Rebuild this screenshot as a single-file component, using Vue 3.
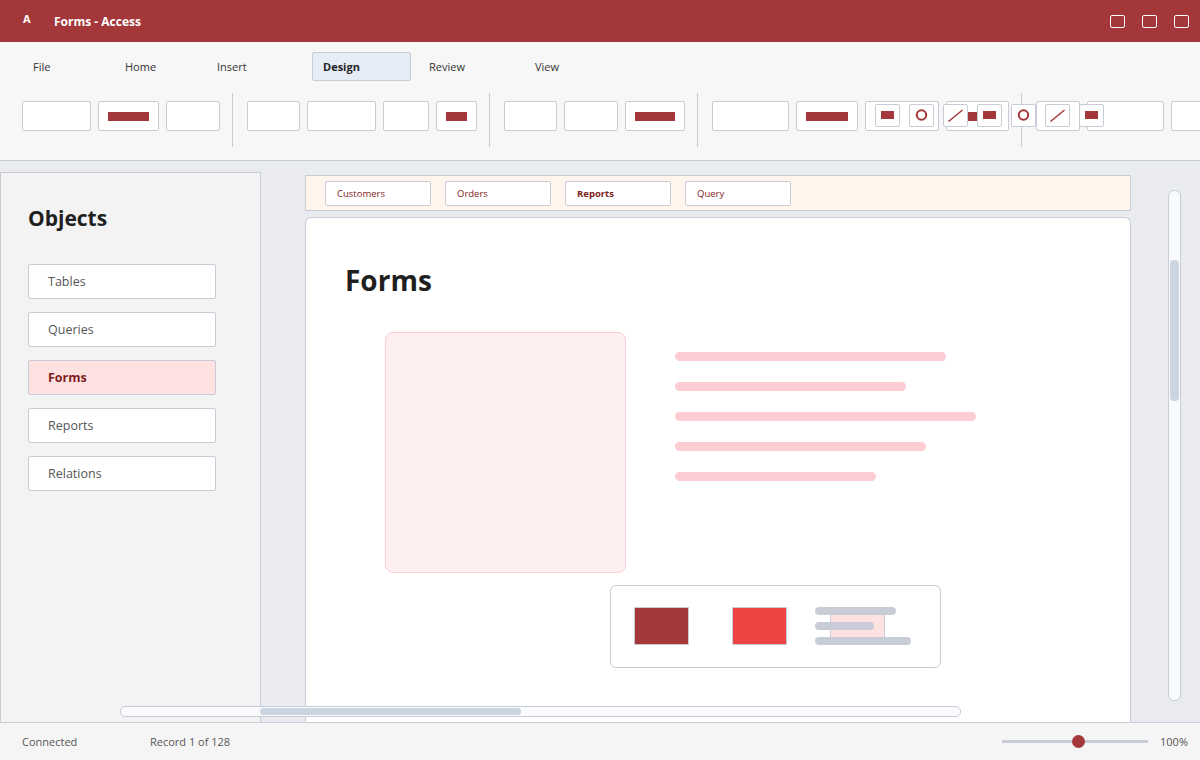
<template>
  <div class="app">
    <header class="titlebar">
      <span class="logo">A</span>
      <span class="title">Forms - Access</span>
      <div class="window-btns">
        <span v-for="n in 3" :key="n" class="window-btn"></span>
      </div>
    </header>

    <section class="ribbon">
      <nav class="tabs">
        <span
          v-for="t in ribbonTabs"
          :key="t.label"
          class="tab"
          :class="{ active: t.label === 'Design', wide: t.wide }"
        >{{ t.label }}</span>
      </nav>
      <div class="groups">
        <div v-for="(group, i) in groups" :key="i" class="group">
          <span
            v-for="(b, j) in group"
            :key="j"
            class="rbtn"
            :style="{ width: b.w + 'px' }"
          ><i v-if="b.fill" class="fill"></i></span>
        </div>
      </div>
      <!-- these sit on top of the ribbon buttons -->
      <div class="tools">
        <span v-for="(k, i) in tools" :key="i" class="tool">
          <svg width="23" height="21" viewBox="0 0 23 21">
            <rect v-if="k === 'rect'" x="5" y="6" width="13" height="8" fill="#a4373a" />
            <circle v-else-if="k === 'circle'" cx="11.5" cy="10" r="4.7" fill="none" stroke="#a4373a" stroke-width="2" />
            <line v-else x1="4.5" y1="16.5" x2="18.5" y2="5" stroke="#a4373a" stroke-width="1.5" />
          </svg>
        </span>
      </div>
    </section>

    <main class="body">
      <aside class="sidebar">
        <h2>Objects</h2>
        <ul>
          <li v-for="o in objects" :key="o" :class="{ active: o === 'Forms' }">{{ o }}</li>
        </ul>
      </aside>

      <div class="center">
        <div class="doc-tabs">
          <span
            v-for="d in docTabs"
            :key="d"
            class="doc-tab"
            :class="{ active: d === 'Reports' }"
          >{{ d }}</span>
        </div>
        <div class="canvas">
          <h1>Forms</h1>
          <div class="hero">
            <div class="placeholder"></div>
            <div class="lines">
              <span v-for="w in lineWidths" :key="w" class="line" :style="{ width: w + 'px' }"></span>
            </div>
          </div>
          <div class="card">
            <span class="swatch dark"></span>
            <span class="swatch red"></span>
            <span class="swatch pale"></span>
            <div class="card-lines">
              <span v-for="w in cardLines" :key="w" :style="{ width: w + 'px' }"></span>
            </div>
          </div>
        </div>
      </div>

      <div class="hscroll"><span class="thumb"></span></div>
      <div class="vscroll"><span class="thumb"></span></div>
    </main>

    <footer class="status">
      <span class="connected">Connected</span>
      <span>Record 1 of 128</span>
      <div class="zoom">
        <div class="slider"><span class="knob"></span></div>
        <span>100%</span>
      </div>
    </footer>
  </div>
</template>

<script setup>
const ribbonTabs = [
  { label: 'File' },
  { label: 'Home' },
  { label: 'Insert', wide: true },
  { label: 'Design', wide: true },
  { label: 'Review', wide: true },
  { label: 'View', wide: true }
]

const groups = [
  [{ w: 69 }, { w: 61, fill: true }, { w: 54 }],
  [{ w: 53 }, { w: 69 }, { w: 46 }, { w: 41, fill: true }],
  [{ w: 53 }, { w: 54 }, { w: 60, fill: true }],
  [{ w: 77 }, { w: 62, fill: true }, { w: 74 }, { w: 63, fill: true }],
  [{ w: 44, fill: true }, { w: 77 }, { w: 60 }]
]

const tools = ['rect', 'circle', 'line', 'rect', 'circle', 'line', 'rect']
const objects = ['Tables', 'Queries', 'Forms', 'Reports', 'Relations']
const docTabs = ['Customers', 'Orders', 'Reports', 'Query']
const lineWidths = [271, 231, 301, 251, 201]
const cardLines = [81, 59, 96]
</script>

<style>
html, body {
  margin: 0;
  background: #e9ebef;
}
</style>

<style scoped>
.app {
  width: 1200px;
  height: 760px;
  display: flex;
  flex-direction: column;
  overflow: hidden;
  font-family: "Open Sans", "Noto Sans", sans-serif;
  color: #1f1f1f;
  background: #e9ebef;
}

.titlebar {
  height: 42px;
  flex: none;
  display: flex;
  align-items: center;
  padding: 0 11px 0 23px;
  background: #a4373a;
  color: #fff;
}
.logo {
  width: 31px;
  font-size: 11px;
  font-weight: 700;
  margin-top: -5px;
}
.title {
  font-size: 12px;
  font-weight: 700;
}
.window-btns {
  margin-left: auto;
  display: flex;
  gap: 17px;
}
.window-btn {
  width: 15px;
  height: 13px;
  box-sizing: border-box;
  border: 1px solid #fff;
  border-radius: 2px;
}

.ribbon {
  position: relative;
  height: 119px;
  flex: none;
  box-sizing: border-box;
  padding: 10px 0 0 22px;
  background: #f7f7f7;
  border-bottom: 1px solid #c8ccd6;
  overflow: hidden;
}
.tabs {
  display: flex;
  gap: 7px;
  height: 29px;
}
.tab {
  width: 85px;
  box-sizing: border-box;
  padding-left: 10px;
  display: flex;
  align-items: center;
  font-size: 11px;
  color: #333;
  border: 1px solid transparent;
  border-radius: 2px;
}
.tab.wide {
  width: 99px;
}
.tab.active {
  background: #e6edf7;
  border-color: #c8ccd6;
  color: #1f1f1f;
  font-weight: 700;
}
.groups {
  display: flex;
  margin-top: 12px;
}
.group {
  display: flex;
  gap: 7px;
  height: 54px;
  padding-right: 12px;
  margin-right: 14px;
  border-right: 1px solid #c8ccd6;
  box-sizing: border-box;
  padding-top: 8px;
}
.group:last-child {
  border-right: none;
}
.rbtn {
  height: 30px;
  flex: none;
  box-sizing: border-box;
  display: flex;
  align-items: center;
  justify-content: center;
  padding: 0 9px;
  background: #fff;
  border: 1px solid #c8ccd6;
  border-radius: 2px;
}
.fill {
  display: block;
  width: 100%;
  height: 9px;
  background: #a4373a;
}
.tools {
  position: absolute;
  left: 875px;
  top: 62px;
  display: flex;
  gap: 9px;
}
.tool {
  width: 25px;
  height: 23px;
  box-sizing: border-box;
  background: #fff;
  border: 1px solid #c8ccd6;
  border-radius: 2px;
}
.tool svg {
  display: block;
}

.body {
  position: relative;
  flex: 1;
  min-height: 0;
  display: flex;
  gap: 44px;
}
.sidebar {
  width: 261px;
  flex: none;
  margin-top: 11px;
  box-sizing: border-box;
  padding: 30px 44px 0 27px;
  background: #f3f3f3;
  border: 1px solid #c8ccd6;
  border-bottom: none;
}
.sidebar h2 {
  margin: 0;
  font-size: 21px;
  line-height: 30px;
  font-weight: 700;
}
.sidebar ul {
  list-style: none;
  margin: 31px 0 0;
  padding: 0;
  display: flex;
  flex-direction: column;
  gap: 13px;
}
.sidebar li {
  height: 35px;
  box-sizing: border-box;
  display: flex;
  align-items: center;
  padding-left: 19px;
  font-size: 12.5px;
  color: #555;
  background: #fff;
  border: 1px solid #c8ccd6;
  border-radius: 2px;
}
.sidebar li.active {
  background: #fee2e2;
  color: #7f1d1d;
  font-weight: 700;
}

.center {
  width: 826px;
  flex: none;
  display: flex;
  flex-direction: column;
  gap: 6px;
  padding-top: 14px;
}
.doc-tabs {
  height: 36px;
  box-sizing: border-box;
  display: flex;
  align-items: center;
  gap: 14px;
  padding: 0 19px;
  background: #fff5ec;
  border: 1px solid #c8ccd6;
}
.doc-tab {
  width: 106px;
  height: 25px;
  box-sizing: border-box;
  display: flex;
  align-items: center;
  padding-left: 11px;
  font-size: 9.5px;
  color: #7f1d1d;
  background: #fff;
  border: 1px solid #c8ccd6;
  border-radius: 2px;
}
.doc-tab.active {
  font-weight: 700;
}
.canvas {
  flex: 1;
  min-height: 0;
  box-sizing: border-box;
  padding: 40px 0 0 39px;
  background: #fff;
  border: 1px solid #c8ccd6;
  border-bottom: none;
  border-radius: 6px 6px 0 0;
}
.canvas h1 {
  margin: 0;
  font-size: 28px;
  line-height: 44px;
  font-weight: 700;
}
.hero {
  display: flex;
  gap: 49px;
  margin: 30px 0 0 40px;
}
.placeholder {
  width: 241px;
  height: 241px;
  box-sizing: border-box;
  background: #fef0f0;
  border: 1px solid #fecdd3;
  border-radius: 8px;
}
.lines {
  display: flex;
  flex-direction: column;
  gap: 21px;
  padding-top: 20px;
}
.line {
  height: 9px;
  border-radius: 5px;
  background: #fecdd3;
}
.card {
  position: relative;
  width: 331px;
  height: 83px;
  box-sizing: border-box;
  margin: 12px 0 0 265px;
  padding: 21px 0 0 23px;
  display: flex;
  gap: 43px;
  background: #fff;
  border: 1px solid #c8ccd6;
  border-radius: 6px;
}
.swatch {
  width: 55px;
  height: 38px;
  box-sizing: border-box;
  border: 1px solid #c8ccd6;
}
.swatch.dark {
  background: #a4373a;
}
.swatch.red {
  background: #ef4444;
}
.swatch.pale {
  background: #fee2e2;
}
.card-lines {
  position: absolute;
  left: 204px;
  top: 21px;
  display: flex;
  flex-direction: column;
  gap: 7px;
}
.card-lines span {
  height: 8px;
  border-radius: 4px;
  background: #c8ccd6;
}

.hscroll {
  position: absolute;
  left: 120px;
  top: 545px;
  width: 841px;
  height: 11px;
  box-sizing: border-box;
  background: #f8fafc;
  border: 1px solid #c8ccd6;
  border-radius: 5px;
}
.hscroll .thumb {
  position: absolute;
  left: 139px;
  top: 1px;
  width: 261px;
  height: 7px;
  border-radius: 4px;
  background: #cbd5e1;
}
.vscroll {
  position: absolute;
  left: 1168px;
  top: 29px;
  width: 13px;
  height: 511px;
  box-sizing: border-box;
  background: #f8fafc;
  border: 1px solid #c8ccd6;
  border-radius: 6px;
}
.vscroll .thumb {
  position: absolute;
  left: 1px;
  top: 69px;
  width: 9px;
  height: 141px;
  border-radius: 4px;
  background: #cbd5e1;
}

.status {
  height: 38px;
  flex: none;
  box-sizing: border-box;
  display: flex;
  align-items: center;
  padding: 0 12px 0 22px;
  font-size: 11px;
  color: #555;
  background: #f5f5f5;
  border-top: 1px solid #c8ccd6;
}
.connected {
  width: 128px;
}
.zoom {
  margin-left: auto;
  display: flex;
  align-items: center;
  gap: 12px;
}
.slider {
  position: relative;
  width: 146px;
  height: 3px;
  background: #c8ccd6;
}
.knob {
  position: absolute;
  left: 70px;
  top: -5px;
  width: 13px;
  height: 13px;
  border-radius: 50%;
  background: #a4373a;
}
</style>
